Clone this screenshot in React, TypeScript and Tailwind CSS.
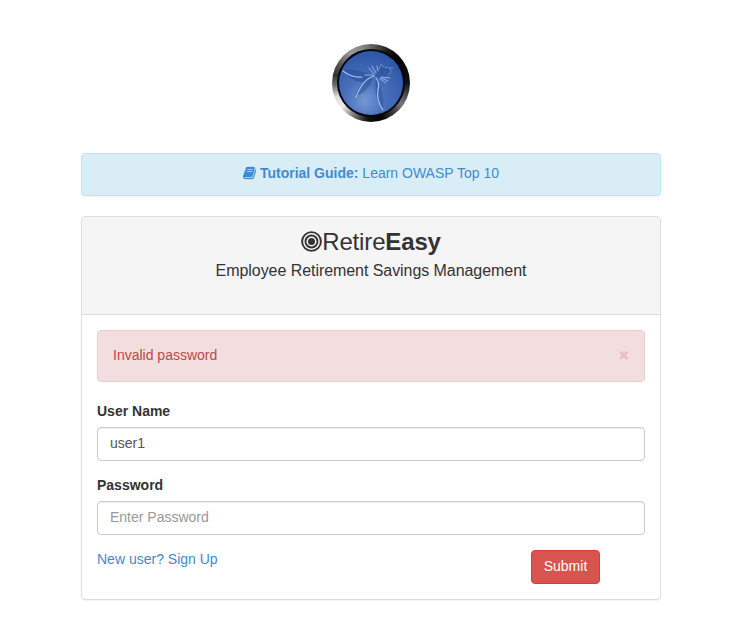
import React, { useState } from "react";

function Emblem() {
  return (
    <div className="flex h-[78px] w-[78px] items-center justify-center rounded-full bg-[conic-gradient(from_0deg,#666_0deg,#222_25deg,#000_45deg,#111_90deg,#555_112deg,#777_125deg,#333_145deg,#000_165deg,#111_185deg,#777_208deg,#eee_230deg,#ddd_248deg,#777_265deg,#333_282deg,#555_300deg,#999_325deg,#888_345deg,#666_360deg)]">
      <svg width="70" height="70" viewBox="6 6 70 70" className="block">
        <defs>
          <radialGradient id="ball" cx="0.4" cy="0.78" r="0.78">
            <stop offset="0" stopColor="#7597d4" />
            <stop offset="0.4" stopColor="#4a70bb" />
            <stop offset="1" stopColor="#2c56a8" />
          </radialGradient>
        </defs>
        <circle cx="41" cy="41" r="34" fill="#04060f" />
        <circle cx="41" cy="41" r="32" fill="url(#ball)" />
        <path d="M14 28Q26 27 43 33Q40 43 30 40Q19 38 14 28ZM43 34Q40 49 25 55Q26 45 43 34ZM46 35Q55 52 53 67Q43 57 46 35Z" fill="#1b4192" opacity="0.4" />
        <path d="M49 26L54 25L60 26L61 30L57 34L51 36L45 34Z" fill="#2c529f" opacity="0.6" />
        <g fill="none" stroke="#b4c9ee" strokeLinecap="round" strokeLinejoin="round">
          <path d="M13 29Q22 36 32 35M44 34Q33 37 26 55M46 36Q50 41 48 48Q46 58 53 68" strokeWidth="1.2" opacity="0.9" />
          <path d="M44 33L35 33M44 32L39 26M46 31L42 24M48 29L47 24M50 37L56 41M51 36L58 39M51 35L60 36" strokeWidth="0.9" opacity="0.85" />
          <path d="M49 27L51 22L54 25L58 26L63 26M60 26L61 30L58 33" strokeWidth="0.6" opacity="0.65" />
        </g>
      </svg>
    </div>
  );
}

function BookIcon() {
  return (
    <svg width="13" height="14" viewBox="0 0 1664 1792" fill="currentColor" stroke="currentColor" strokeWidth="40" className="mr-1 inline-block align-[-2px]">
      <path d="M1639 478q40 57 18 129l-275 906q-19 64-76.5 107.5t-122.5 43.5h-923q-77 0-148.5-53.5t-99.5-131.5q-24-67-2-127 0-4 3-27t4-37q1-8-3-21.5t-3-19.5q2-11 8-21t16.5-23.5 16.5-23.5q23-38 45-91.5t30-91.5q3-10 .5-30t-.5-28q3-11 17-28t17-23q21-36 42-92t25-90q1-9-2.5-32t.5-28q4-13 22-30.5t22-22.5q19-26 42.5-84.5t27.5-96.5q1-8-3-25.5t-2-26.5q2-8 9-18t18-23 17-21q8-12 16.5-30.5t15-35 16-36 19.5-32 26.5-23.5 36-11.5 47.5 5.5l-1 3q38-9 51-9h761q74 0 114 56t18 130l-274 906q-36 119-71.5 153.5t-128.5 34.5h-869q-27 0-38 15-11 16-1 43 24 70 144 70h923q29 0 56-15.5t35-41.5l300-987q7-22 5-57 38 15 59 43zm-1064 2q-4 13 2 22.5t20 9.5h608q13 0 25.5-9.5t16.5-22.5l21-64q4-13-2-22.5t-20-9.5h-608q-13 0-25.5 9.5t-16.5 22.5zm-83 256q-4 13 2 22.5t20 9.5h608q13 0 25.5-9.5t16.5-22.5l21-64q4-13-2-22.5t-20-9.5h-608q-13 0-25.5 9.5t-16.5 22.5z" />
    </svg>
  );
}

function TargetIcon() {
  return (
    <svg width="21" height="22" viewBox="0 0 21 22" fill="none" stroke="#333" strokeWidth="1.9" className="block">
      <circle cx="10.5" cy="10.5" r="9.4" />
      <circle cx="10.5" cy="10.5" r="6" />
      <circle cx="10.5" cy="10.5" r="3.5" fill="#333" stroke="none" />
    </svg>
  );
}

const inputClass =
  "block h-[34px] w-full rounded border border-[#ccc] bg-white px-3 pb-[7px] pt-[5px] text-[14px] leading-5 text-[#555] shadow-[inset_0_1px_1px_rgba(0,0,0,0.075)] outline-none placeholder:text-[#999]";

export default function App() {
  const [user, setUser] = useState("user1");
  return (
    <main className="h-[635px] bg-white pl-[81px] pt-[44px] font-['Liberation_Sans',Arial,sans-serif] text-[14px] leading-5 text-[#333]">
      <div className="w-[580px]">
        <div className="flex h-[109px] justify-center">
          <Emblem />
        </div>
        <div className="h-[43px] rounded border border-[#bce8f1] bg-[#d9edf7] pt-[9px] text-center shadow-[0_1px_1px_rgba(0,0,0,0.05)]">
          <a href="#" className="text-[#428bca]">
            <BookIcon />
            <b>Tutorial Guide:</b> Learn OWASP Top 10
          </a>
        </div>
        <section className="mt-5 h-[384px] rounded border border-[#ddd] bg-white shadow-[0_1px_1px_rgba(0,0,0,0.05)]">
          <header className="h-[98px] rounded-t-[3px] border-b border-[#ddd] bg-[#f5f5f5] pt-[11px] text-center">
            <h1 className="flex h-[27px] items-center justify-center text-[24px] leading-[27px] tracking-[-0.15px]">
              <TargetIcon />
              <span>Retire<b>Easy</b></span>
            </h1>
            <h2 className="mt-[5px] text-[16px] leading-[22px] tracking-[-0.06px]">Employee Retirement Savings Management</h2>
          </header>
          <form className="px-[15px] pt-[15px]" onSubmit={(e) => e.preventDefault()}>
            <div className="flex h-[52px] items-center justify-between rounded border border-[#ebccd1] bg-[#f2dede] pb-[2px] pl-[15px] pr-[15px] text-[#b94a48]">
              <span>Invalid password</span>
              <button type="button" aria-label="Close" className="text-[#e6bfbf]">
                <svg width="10" height="10" viewBox="0 0 10 10" stroke="currentColor" strokeWidth="2.7" className="block">
                  <path d="M1.3 1.8L8.3 8.8M8.3 1.8L1.3 8.8" />
                </svg>
              </button>
            </div>
            <label className="mb-[6px] mt-[19px] block font-bold" htmlFor="user">User Name</label>
            <input id="user" className={inputClass} value={user} onChange={(e) => setUser(e.target.value)} />
            <label className="mb-[6px] mt-[14px] block font-bold" htmlFor="password">Password</label>
            <input id="password" type="password" className={inputClass} placeholder="Enter Password" />
            <div className="mt-[15px] flex items-start justify-between pr-[45px]">
              <a href="#" className="-mt-px text-[#428bca]">New user? Sign Up</a>
              <button type="submit" className="h-[34px] w-[69px] rounded border border-[#d43f3a] bg-[#d9534f] pb-[2px] text-white">Submit</button>
            </div>
          </form>
        </section>
      </div>
    </main>
  );
}
